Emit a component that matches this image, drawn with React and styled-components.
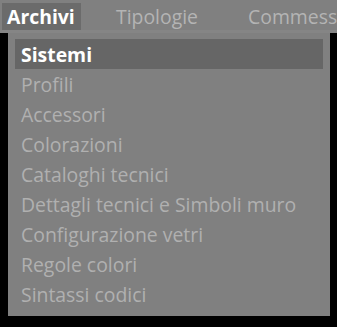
import React from "react";
import styled, { createGlobalStyle } from "styled-components";

const Global = createGlobalStyle`
html, body {
  margin: 0;
  background: #000;
  width: 337px;
  height: 327px;
  overflow: hidden;
}
`

const Pagina = styled.div`
display: flex;
flex-direction: column;
width: 337px;
height: 327px;
background: #000;
font-family: "Open Sans", "Noto Sans", sans-serif;
overflow: hidden;
`
const Barra = styled.div`
display: flex;
align-items: stretch;
height: 33px;
padding: 3px 0 0 2px;
box-sizing: border-box;
background: #808080;
border-bottom: 3px solid #858585;
white-space: nowrap;
`
const Tab = styled.div`
display: flex;
align-items: center;
flex: none;
width: ${p => p.$w}px;
margin-right: ${p => p.$gap || 0}px;
padding-left: 5px;
box-sizing: border-box;
font-size: 19.4px;
font-weight: ${p => (p.$attivo ? 700 : 400)};
color: ${p => (p.$attivo ? "#ffffff" : "#b4b4b4")};
background: ${p => (p.$attivo ? "#6b6b6b" : "transparent")};
`
const Tendina = styled.div`
display: flex;
flex-direction: column;
margin-left: 8px;
width: 322px;
padding: 6px 7px 7px;
box-sizing: border-box;
background: #808080;
`
const Voce = styled.div`
display: flex;
align-items: center;
height: 30px;
padding-left: 6px;
font-size: 19.4px;
font-weight: ${p => (p.$attivo ? 700 : 400)};
color: ${p => (p.$attivo ? "#ffffff" : "#b0b0b0")};
background: ${p => (p.$attivo ? "#666666" : "transparent")};
`

const voci = [
    "Sistemi",
    "Profili",
    "Accessori",
    "Colorazioni",
    "Cataloghi tecnici",
    "Dettagli tecnici e Simboli muro",
    "Configurazione vetri",
    "Regole colori",
    "Sintassi codici",
]

export default function App() {
    return (
        <Pagina>
            <Global />
            <Barra>
                <Tab $attivo $w={79} $gap={30}>Archivi</Tab>
                <Tab $w={132}>Tipologie</Tab>
                <Tab $w={140}>Commesse</Tab>
            </Barra>
            <Tendina>
                {voci.map((v, i) => (
                    <Voce key={v} $attivo={i === 0}>{v}</Voce>
                ))}
            </Tendina>
        </Pagina>
    )
}
